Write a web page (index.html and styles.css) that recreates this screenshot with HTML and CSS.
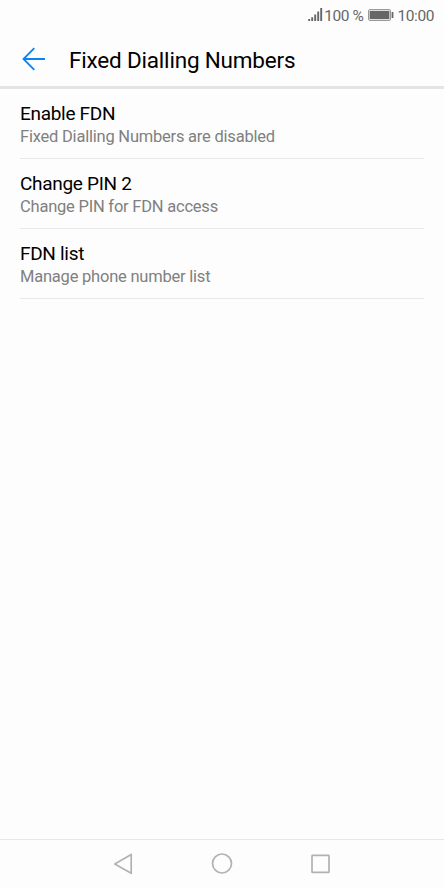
FILE: index.html
```html
<!DOCTYPE html>
<html lang="en">

<head>
    <meta charset="utf-8">
    <meta name="viewport" content="width=device-width, initial-scale=1.0">
    <title>Fixed Dialling Numbers</title>
    <link rel="stylesheet" href="styles.css">
</head>

<body>
    <div class="screen">
        <div class="status">
            <svg class="signal" width="15" height="13" viewBox="0 0 15 13">
                <path d="M1.2 13V11M4.2 13V9.2M7.2 13V6.5M10.2 13V3.5M13.2 13V0" />
            </svg>
            <span class="percent">100 %</span>
            <svg class="battery" width="26" height="12" viewBox="0 0 26 12">
                <rect class="shell" x="0.5" y="0.5" width="22" height="11" rx="1.5" />
                <rect class="fill" x="1.6" y="1.8" width="19.8" height="8.4" />
                <rect class="fill" x="23.6" y="3" width="1.8" height="6" />
            </svg>
            <span class="time">10:00</span>
        </div>

        <header class="header">
            <svg class="back" width="24" height="24" viewBox="0 0 24 24">
                <path d="M23 12H1.5M12.3 1.2L1.5 12L12.3 22.8" />
            </svg>
            <h1 class="title">Fixed Dialling Numbers</h1>
        </header>

        <main class="list">
            <div class="item">
                <div class="name">Enable FDN</div>
                <div class="summary">Fixed Dialling Numbers are disabled</div>
            </div>
            <div class="item">
                <div class="name">Change PIN 2</div>
                <div class="summary">Change PIN for FDN access</div>
            </div>
            <div class="item">
                <div class="name">FDN list</div>
                <div class="summary">Manage phone number list</div>
            </div>
        </main>

        <nav class="navbar">
            <svg width="22" height="22" viewBox="0 0 22 22">
                <path d="M19.2 1.5V20.3L2.8 11Z" />
            </svg>
            <svg width="22" height="22" viewBox="0 0 22 22">
                <circle cx="11" cy="10.5" r="9.5" />
            </svg>
            <svg width="22" height="22" viewBox="0 0 22 22">
                <rect x="2" y="2.4" width="17" height="17" rx="0.5" />
            </svg>
        </nav>
    </div>
</body>

</html>
```

FILE: styles.css
```css
body {
    margin: 0;
    background: #fdfdfd;
    font-family: Roboto, "Liberation Sans", sans-serif;
    color: #000;
}

.screen {
    display: flex;
    flex-direction: column;
    height: 100vh;
}

/* status bar */
.status {
    display: flex;
    justify-content: flex-end;
    align-items: center;
    box-sizing: border-box;
    height: 32px;
    padding-right: 10px;
    font-size: 15.5px;
    letter-spacing: -0.42px;
    color: #666;
}

.signal {
    margin: 0 1px 3px 0;
    stroke: #666;
    stroke-width: 1.9;
}

.percent {
    margin-right: -1px;
}

.battery {
    margin: 0 4px 2px 5px;
}

.shell {
    fill: none;
    stroke: #999;
}

.fill {
    fill: #666;
}

/* title bar */
.header {
    display: flex;
    align-items: center;
    box-sizing: border-box;
    height: 57px;
    padding-left: 22px;
    border-bottom: 3px solid #e4e4e4;
}

.back {
    margin-right: 23px;
    fill: none;
    stroke: #0a84f5;
    stroke-width: 1.8;
}

.title {
    margin: 2px 0 0;
    font-size: 22.5px;
    font-weight: 400;
    letter-spacing: -0.19px;
}

/* settings */
.list {
    flex: 1;
    padding: 0 20px;
}

.item {
    box-sizing: border-box;
    height: 70px;
    padding-top: 13px;
    border-bottom: 1px solid #e8e8e8;
}

.name {
    font-size: 19px;
    line-height: 24px;
    letter-spacing: -0.3px;
}

.summary {
    font-size: 16.5px;
    line-height: 22px;
    letter-spacing: -0.22px;
    color: #808080;
}

/* navigation keys */
.navbar {
    display: flex;
    justify-content: center;
    align-items: center;
    gap: 77px;
    height: 48px;
    border-top: 1px solid #e6e6e6;
}

.navbar svg {
    fill: none;
    stroke: #b2b2b2;
    stroke-width: 1.7;
    stroke-linejoin: round;
}
```
